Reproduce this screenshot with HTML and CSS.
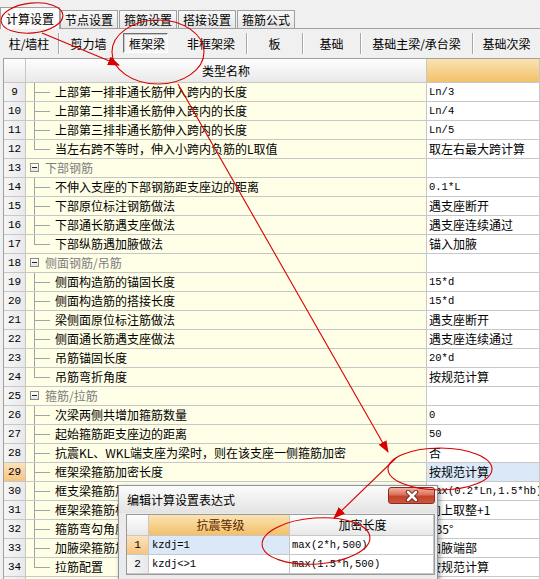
FILE: index.html
```html
<!DOCTYPE html>
<html lang="zh">
<head>
<meta charset="utf-8">
<title>计算设置</title>
<link rel="stylesheet" href="styles.css">
</head>
<body>
<div class="app">
  <div class="tabs">
    <div class="tab active">计算设置</div>
    <div class="tab">节点设置</div>
    <div class="tab">箍筋设置</div>
    <div class="tab">搭接设置</div>
    <div class="tab">箍筋公式</div>
  </div>
  <div class="toolbar">
    <div class="tb sep">柱/墙柱</div>
    <div class="tb">剪力墙</div>
    <div class="tb tb-pressed"><span class="pressed">框架梁</span></div>
    <div class="tb sep">非框架梁</div>
    <div class="tb sep">板</div>
    <div class="tb sep">基础</div>
    <div class="tb sep">基础主梁/承台梁</div>
    <div class="tb">基础次梁</div>
  </div>
  <div class="grid">
    <div class="row head"><div class="num"></div><div class="name">类型名称</div><div class="val"></div></div>
    <div class="row child"><div class="num">9</div><div class="name">上部第一排非通长筋伸入跨内的长度</div><div class="val mono">Ln/3</div></div>
    <div class="row child"><div class="num">10</div><div class="name">上部第二排非通长筋伸入跨内的长度</div><div class="val mono">Ln/4</div></div>
    <div class="row child"><div class="num">11</div><div class="name">上部第三排非通长筋伸入跨内的长度</div><div class="val mono">Ln/5</div></div>
    <div class="row child last"><div class="num">12</div><div class="name">当左右跨不等时，伸入小跨内负筋的L取值</div><div class="val">取左右最大跨计算</div></div>
    <div class="row group"><div class="num">13</div><div class="name">下部钢筋</div><div class="val"></div></div>
    <div class="row child"><div class="num">14</div><div class="name">不伸入支座的下部钢筋距支座边的距离</div><div class="val mono">0.1*L</div></div>
    <div class="row child"><div class="num">15</div><div class="name">下部原位标注钢筋做法</div><div class="val">遇支座断开</div></div>
    <div class="row child"><div class="num">16</div><div class="name">下部通长筋遇支座做法</div><div class="val">遇支座连续通过</div></div>
    <div class="row child last"><div class="num">17</div><div class="name">下部纵筋遇加腋做法</div><div class="val">锚入加腋</div></div>
    <div class="row group"><div class="num">18</div><div class="name">侧面钢筋/吊筋</div><div class="val"></div></div>
    <div class="row child"><div class="num">19</div><div class="name">侧面构造筋的锚固长度</div><div class="val mono">15*d</div></div>
    <div class="row child"><div class="num">20</div><div class="name">侧面构造筋的搭接长度</div><div class="val mono">15*d</div></div>
    <div class="row child"><div class="num">21</div><div class="name">梁侧面原位标注筋做法</div><div class="val">遇支座断开</div></div>
    <div class="row child"><div class="num">22</div><div class="name">侧面通长筋遇支座做法</div><div class="val">遇支座连续通过</div></div>
    <div class="row child"><div class="num">23</div><div class="name">吊筋锚固长度</div><div class="val mono">20*d</div></div>
    <div class="row child last"><div class="num">24</div><div class="name">吊筋弯折角度</div><div class="val">按规范计算</div></div>
    <div class="row group"><div class="num">25</div><div class="name">箍筋/拉筋</div><div class="val"></div></div>
    <div class="row child"><div class="num">26</div><div class="name">次梁两侧共增加箍筋数量</div><div class="val mono">0</div></div>
    <div class="row child"><div class="num">27</div><div class="name">起始箍筋距支座边的距离</div><div class="val mono">50</div></div>
    <div class="row child"><div class="num">28</div><div class="name">抗震KL、WKL端支座为梁时，则在该支座一侧箍筋加密</div><div class="val">否</div></div>
    <div class="row child sel"><div class="num">29</div><div class="name">框架梁箍筋加密长度</div><div class="val">按规范计算</div></div>
    <div class="row child"><div class="num">30</div><div class="name">框支梁箍筋加密长度</div><div class="val mono">max(0.2*Ln,1.5*hb)</div></div>
    <div class="row child"><div class="num">31</div><div class="name">框架梁箍筋根数计算方式</div><div class="val">向上取整+1</div></div>
    <div class="row child"><div class="num">32</div><div class="name">箍筋弯勾角度</div><div class="val">135°</div></div>
    <div class="row child"><div class="num">33</div><div class="name">加腋梁箍筋加密起始位置</div><div class="val">加腋端部</div></div>
    <div class="row child last"><div class="num">34</div><div class="name">拉筋配置</div><div class="val">按规范计算</div></div>
    <div class="row"><div class="num"></div><div class="name"></div><div class="val"></div></div>
  </div>

  <div class="dialog">
    <div class="dlg-title">
      <span class="dlg-caption">编辑计算设置表达式</span>
      <div class="dlg-close">
        <svg width="16" height="12" viewBox="0 0 16 12">
          <path d="M4 2 L12 10 M12 2 L4 10" stroke="#6a1a10" stroke-width="4.4" stroke-linecap="round" fill="none"/>
          <path d="M4 2 L12 10 M12 2 L4 10" stroke="#ffffff" stroke-width="2.6" stroke-linecap="round" fill="none"/>
        </svg>
      </div>
    </div>
    <div class="dlg-body">
      <div class="dtable">
        <div class="drow dhead"><div class="dnum"></div><div class="dc1">抗震等级</div><div class="dc2">加密长度</div></div>
        <div class="drow dsel"><div class="dnum">1</div><div class="dc1 mono">kzdj=1</div><div class="dc2 mono">max(2*h,500)</div></div>
        <div class="drow"><div class="dnum">2</div><div class="dc1 mono">kzdj&lt;&gt;1</div><div class="dc2 mono">max(1.5*h,500)</div></div>
      </div>
    </div>
  </div>

  <svg class="annot" width="540" height="579" viewBox="0 0 540 579">
    <defs>
      <marker id="ah" viewBox="0 0 12 10" refX="11" refY="5" markerWidth="12" markerHeight="10" markerUnits="userSpaceOnUse" orient="auto">
        <path d="M0,0.5 L12,5 L0,9.5 z" fill="#d80000"/>
      </marker>
    </defs>
    <g fill="none" stroke="#d80000" stroke-width="1.1">
      <ellipse cx="32" cy="18" rx="31" ry="15" transform="rotate(-6 32 18)"/>
      <line x1="42" y1="33" x2="119" y2="65" marker-end="url(#ah)"/>
      <ellipse cx="158" cy="52" rx="46" ry="32"/>
      <line x1="178" y1="84" x2="388" y2="452" marker-end="url(#ah)"/>
      <ellipse cx="440" cy="469" rx="52" ry="21"/>
      <line x1="396" y1="458" x2="334" y2="518" marker-end="url(#ah)"/>
      <ellipse cx="316" cy="541" rx="54" ry="23" transform="rotate(-4 316 541)"/>
    </g>
  </svg>
</div>
</body>
</html>
```

FILE: styles.css
```css
html, body {
  margin: 0;
  padding: 0;
}
body {
  background: #f0f0f0;
  font-family: "Noto Sans CJK SC", "Noto Sans", sans-serif;
  font-size: 12px;
  color: #000;
}
.app {
  position: relative;
  width: 540px;
  height: 579px;
  overflow: hidden;
  background: #f0f0f0;
}

/* top tabs */
.tabs {
  display: flex;
  align-items: flex-end;
  gap: 1px;
  height: 29px;
  box-sizing: border-box;
  padding-left: 2px;
  border-bottom: 1px solid #a0a0a0;
}
.tab {
  width: 58px;
  height: 18px;
  box-sizing: border-box;
  border: 1px solid #a0a0a0;
  border-bottom: none;
  text-align: center;
  line-height: 17px;
  background: linear-gradient(#f8f8f8, #e6e6e6);
  white-space: nowrap;
}
.tab.active {
  width: 60px;
  height: 22px;
  margin: 0 -1px -1px -2px;
  line-height: 21px;
  background: #fbfbfb;
  position: relative;
}

/* second row of buttons */
.toolbar {
  display: grid;
  grid-template-columns: 59px 59px 58px 71px 56px 58px 112px 1fr;
  align-items: center;
  height: 29px;
}
.tb {
  height: 21px;
  line-height: 21px;
  box-sizing: border-box;
  text-align: center;
  white-space: nowrap;
}
.tb.sep {
  border-right: 1px solid #a8a8a8;
  box-shadow: 1px 0 0 #ffffff;
}
.tb-pressed {
  text-align: left;
  padding-left: 5px;
}
.pressed {
  display: inline-block;
  height: 20px;
  line-height: 19px;
  box-sizing: border-box;
  padding: 0 2px 0 5px;
  border: 1px solid;
  border-color: #707070 #ffffff #ffffff #707070;
  background: #f6f6f6;
  box-shadow: inset 1px 1px 0 #c8c8c8;
}

/* main grid */
.grid {
  margin-left: 3px;
  border-left: 1px solid #a0a0a0;
  border-top: 1px solid #a0a0a0;
}
.row {
  display: grid;
  grid-template-columns: 22px 401px 1fr;
  height: 19px;
}
.row > div {
  box-sizing: border-box;
  border-right: 1px solid #c7c7c7;
  border-bottom: 1px solid #c7c7c7;
  line-height: 18px;
  white-space: nowrap;
  overflow: hidden;
}
.num {
  text-align: center;
  background: linear-gradient(90deg, #f6f6f6, #e9e9ec);
  font-family: "Liberation Mono", monospace;
  font-size: 11px;
}
.name {
  position: relative;
  background: #ffffe8;
  padding-left: 29px;
}
.val {
  background: #ffffff;
  padding-left: 2px;
}
.mono {
  font-family: "Liberation Mono", monospace;
  font-size: 10.5px;
}

.row.head {
  height: 24px;
}
.row.head > div {
  line-height: 23px;
}
.head .num,
.head .name {
  background: linear-gradient(#fefefe, #e9e9e9);
}
.head .name {
  padding-left: 0;
  text-align: center;
}
.head .val {
  background: linear-gradient(#fbe3b2, #f2c06a);
}

/* tree lines */
.child .name::before {
  content: "";
  position: absolute;
  left: 8px;
  top: 0;
  bottom: -1px;
  border-left: 1px solid #a4a4a4;
}
.child.last .name::before {
  bottom: auto;
  height: 9px;
}
.child .name::after {
  content: "";
  position: absolute;
  left: 8px;
  top: 9px;
  width: 16px;
  border-top: 1px solid #a4a4a4;
}

/* group rows */
.group .name {
  padding-left: 19px;
  color: #7c7c7c;
}
.group .name::before {
  content: "";
  position: absolute;
  left: 4px;
  top: 4px;
  width: 9px;
  height: 9px;
  box-sizing: border-box;
  border: 1px solid #8a8a8a;
  background: linear-gradient(#ffffff, #e4e4e4);
}
.group .name::after {
  content: "";
  position: absolute;
  left: 6px;
  top: 8px;
  width: 5px;
  border-top: 1px solid #222;
}

/* selected row */
.sel .num {
  background: linear-gradient(#fde2bc, #f7c47f);
}
.sel .val {
  background: #dae8f8;
}

/* dialog */
.dialog {
  position: absolute;
  left: 118px;
  top: 485px;
  width: 320px;
  height: 110px;
  box-sizing: border-box;
  border: 1px solid #8796a5;
  background: #ebebeb;
  box-shadow: 2px 2px 5px rgba(0, 0, 0, 0.35);
}
.dlg-title {
  display: flex;
  align-items: flex-start;
  height: 27px;
  background: linear-gradient(#fcfcfc, #e3e3e3);
}
.dlg-caption {
  padding-left: 8px;
  line-height: 27px;
}
.dlg-close {
  margin-left: auto;
  margin-right: 2px;
  margin-top: 1px;
  width: 47px;
  height: 17px;
  box-sizing: border-box;
  border: 1px solid #8a2b1c;
  border-radius: 3px;
  background: linear-gradient(#eeb2a2 0%, #dc7259 45%, #c4432b 55%, #c8583c 100%);
  display: flex;
  align-items: center;
  justify-content: center;
}
.dlg-body {
  padding: 1px 0 0 7px;
}
.dtable {
  width: 309px;
  box-sizing: border-box;
  border: 1px solid #9a9a9a;
  background: #ffffff;
}
.drow {
  display: grid;
  grid-template-columns: 22px 141px 1fr;
  height: 19px;
}
.drow > div {
  box-sizing: border-box;
  border-right: 1px solid #c7c7c7;
  border-bottom: 1px solid #c7c7c7;
  line-height: 18px;
  white-space: nowrap;
  overflow: hidden;
}
.drow.dhead {
  height: 21px;
}
.drow.dhead > div {
  line-height: 20px;
  text-align: center;
  background: linear-gradient(#fdfdfd, #e8e8e8);
}
.drow.dhead .dc1 {
  background: linear-gradient(#fbe3b2, #f2c06a);
  color: #5a2200;
}
.dnum {
  text-align: center;
  font-family: "Liberation Mono", monospace;
  font-size: 11px;
  background: linear-gradient(90deg, #f6f6f6, #e9e9ec);
}
.dc1 {
  padding-left: 3px;
}
.dc2 {
  padding-left: 2px;
}
.dsel .dnum {
  background: linear-gradient(#fde2bc, #f7c47f);
}
.dsel .dc1 {
  background: #dae8f8;
}

/* red hand-drawn annotations */
.annot {
  position: absolute;
  left: 0;
  top: 0;
  pointer-events: none;
}
```
